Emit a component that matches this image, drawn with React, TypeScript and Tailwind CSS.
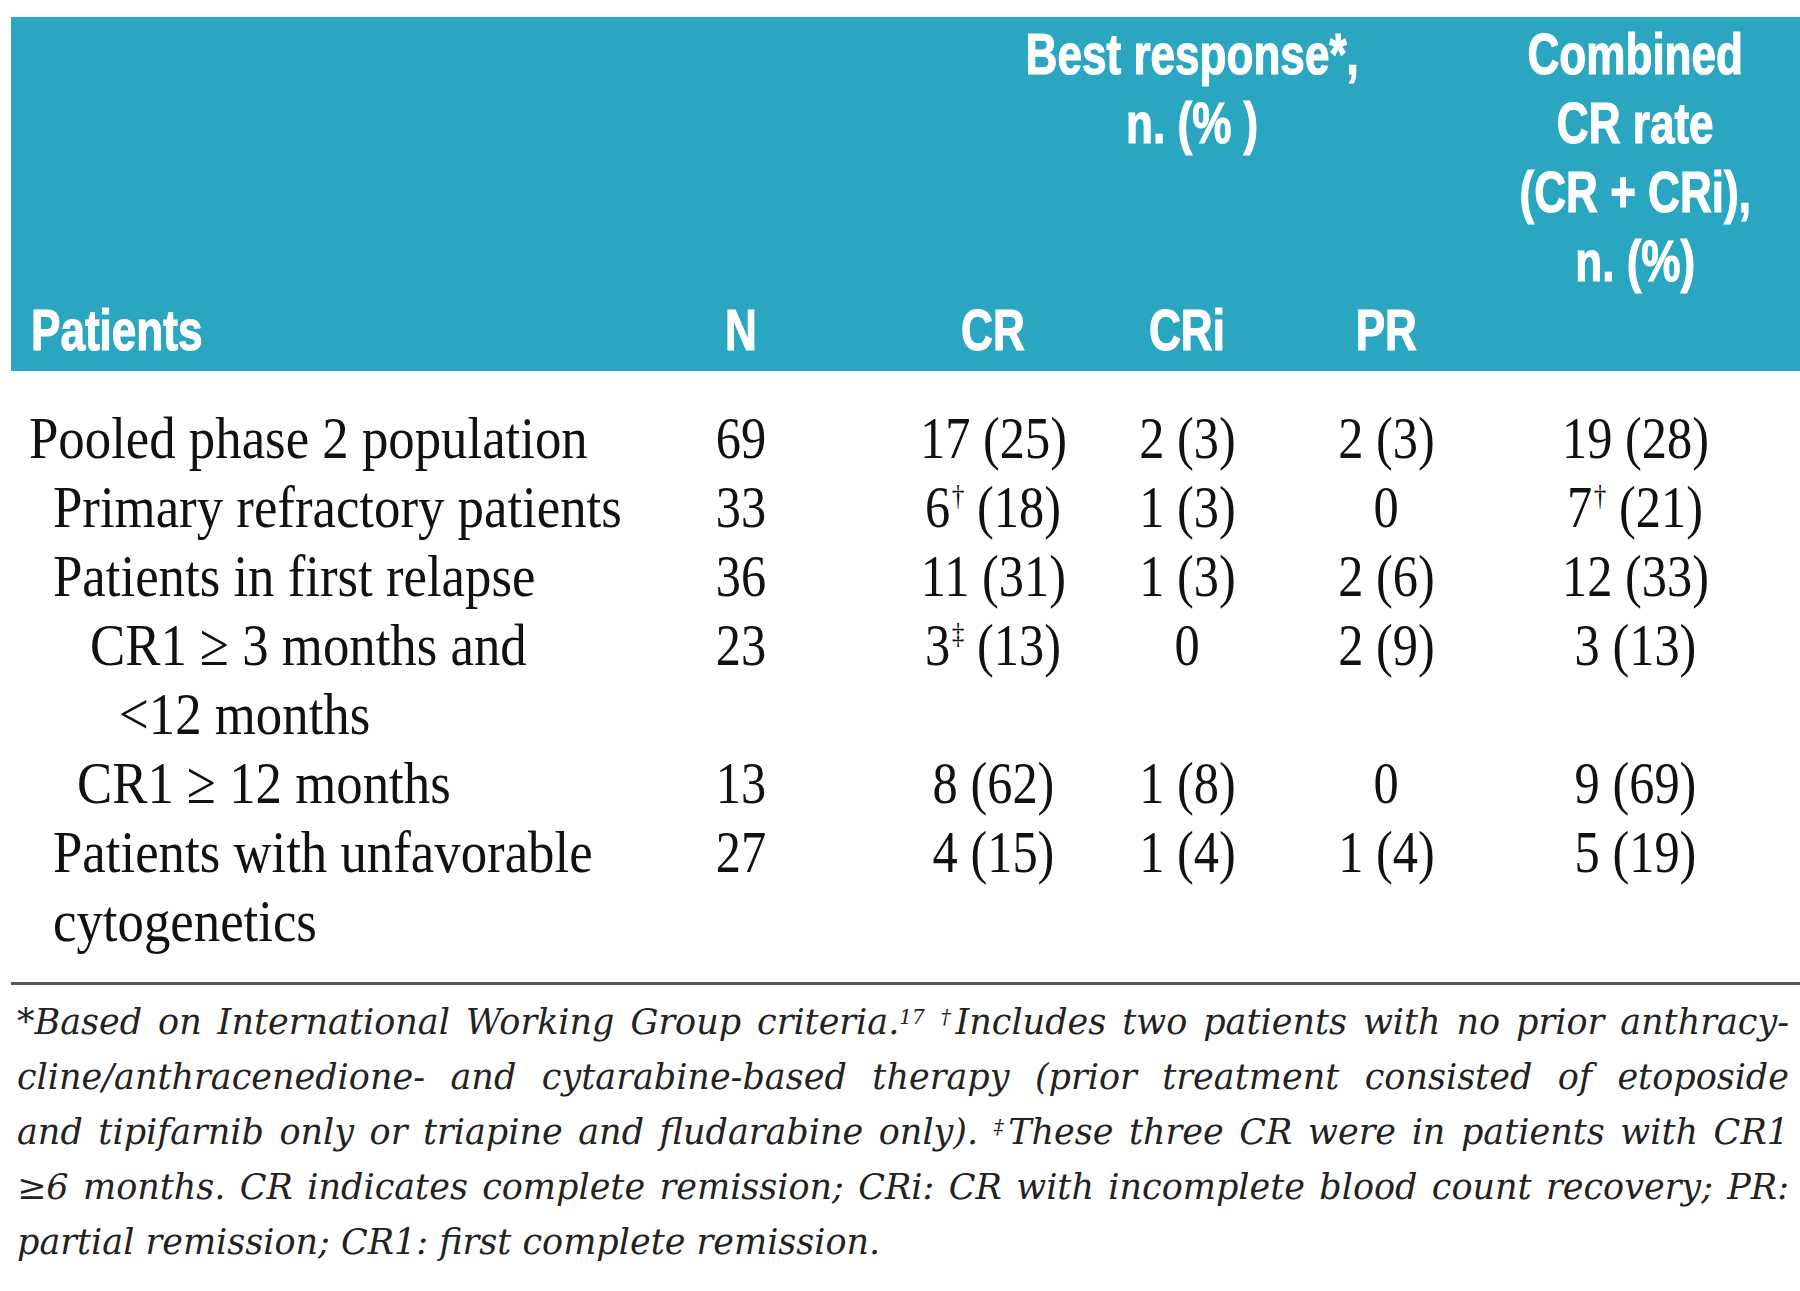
import React from "react";

const cols =
  "grid grid-cols-[604px_252px_252px_136px_262px_236px_47px]";

type Row = {
  label: { text: string; indent: number }[];
  n: string;
  cr: React.ReactNode;
  cri: React.ReactNode;
  pr: React.ReactNode;
  comb: React.ReactNode;
};

const Dag = ({ c }: { c: string }) => (
  <span className="text-[30px] leading-none relative -top-[22px] ml-[2px]">{c}</span>
);

const rows: Row[] = [
  {
    label: [{ text: "Pooled phase 2 population", indent: 18 }],
    n: "69",
    cr: "17 (25)",
    cri: "2 (3)",
    pr: "2 (3)",
    comb: "19 (28)",
  },
  {
    label: [{ text: "Primary refractory patients", indent: 42 }],
    n: "33",
    cr: (
      <>
        6<Dag c="†" /> (18)
      </>
    ),
    cri: "1 (3)",
    pr: "0",
    comb: (
      <>
        7<Dag c="†" /> (21)
      </>
    ),
  },
  {
    label: [{ text: "Patients in first relapse", indent: 42 }],
    n: "36",
    cr: "11 (31)",
    cri: "1 (3)",
    pr: "2 (6)",
    comb: "12 (33)",
  },
  {
    label: [
      { text: "CR1 ≥ 3 months and", indent: 79 },
      { text: "<12 months", indent: 108 },
    ],
    n: "23",
    cr: (
      <>
        3<Dag c="‡" /> (13)
      </>
    ),
    cri: "0",
    pr: "2 (9)",
    comb: "3 (13)",
  },
  {
    label: [{ text: "CR1 ≥ 12 months", indent: 66 }],
    n: "13",
    cr: "8 (62)",
    cri: "1 (8)",
    pr: "0",
    comb: "9 (69)",
  },
  {
    label: [
      { text: "Patients with unfavorable", indent: 42 },
      { text: "cytogenetics", indent: 42 },
    ],
    n: "27",
    cr: "4 (15)",
    cri: "1 (4)",
    pr: "1 (4)",
    comb: "5 (19)",
  },
];

const Num = ({ children }: { children: React.ReactNode }) => (
  <div className="flex justify-center whitespace-nowrap">
    <span className="inline-block scale-x-[0.84]">{children}</span>
  </div>
);

const H = ({ children, left }: { children: React.ReactNode; left?: boolean }) => (
  <span
    className={
      "inline-block scale-x-[0.76] whitespace-nowrap text-center [-webkit-text-stroke:1.2px_white] " +
      (left ? "origin-left" : "origin-center")
    }
  >
    {children}
  </span>
);

const footLines = [
  <>
    *Based on International Working Group criteria.<sup className="text-[20px]">17</sup>{" "}
    <sup className="text-[20px]">†</sup>Includes two patients with no prior anthracy-
  </>,
  <>cline/anthracenedione- and cytarabine-based therapy (prior treatment consisted of etoposide</>,
  <>
    and tipifarnib only or triapine and fludarabine only). <sup className="text-[20px]">‡</sup>These three CR were in patients with CR1
  </>,
  <>≥6 months. CR indicates complete remission; CRi: CR with incomplete blood count recovery; PR:</>,
];

export default function App() {
  return (
    <div className="w-[1800px] min-h-[1291px] bg-white pt-[17px]">
      {/* Header */}
      <div className="ml-[11px] bg-[#2aa6c1] text-white pt-[2px] h-[354px] font-['Liberation_Sans',Arial,sans-serif] font-bold text-[58px] leading-[69px]">
        <div className={cols}>
          <div className="col-start-3 col-span-3 row-start-1 flex justify-center">
            <H>
              Best response*,
              <br />
              n. (% )
            </H>
          </div>
          <div className="col-start-6 row-start-1 flex justify-center">
            <H>
              Combined
              <br />
              CR rate
              <br />
              (CR + CRi),
              <br />
              n. (%)
            </H>
          </div>
          <div className="col-start-1 row-start-2 pl-[20px]">
            <H left>Patients</H>
          </div>
          <div className="col-start-2 row-start-2 flex justify-center">
            <H>N</H>
          </div>
          <div className="col-start-3 row-start-2 flex justify-center">
            <H>CR</H>
          </div>
          <div className="col-start-4 row-start-2 flex justify-center">
            <H>CRi</H>
          </div>
          <div className="col-start-5 row-start-2 flex justify-center">
            <H>PR</H>
          </div>
        </div>
      </div>

      {/* Body */}
      <div className="ml-[11px] pt-[33px] pb-[26px] font-['Liberation_Serif','Times_New_Roman',serif] text-[60px] leading-[69px] text-[#111]">
        {rows.map((r, i) => (
          <div key={i} className={cols}>
            <div>
              {r.label.map((l, j) => (
                <div key={j} className="whitespace-nowrap" style={{ paddingLeft: l.indent }}>
                  <span className="inline-block origin-left scale-x-[0.88]">{l.text}</span>
                </div>
              ))}
            </div>
            <Num>{r.n}</Num>
            <Num>{r.cr}</Num>
            <Num>{r.cri}</Num>
            <Num>{r.pr}</Num>
            <Num>{r.comb}</Num>
          </div>
        ))}
      </div>

      {/* Rule */}
      <div className="ml-[11px] h-[3px] bg-[#555]" />

      {/* Footnote */}
      <div className="ml-[17px] mr-[11px] pt-[10px] italic font-['DejaVu_Serif',serif] text-[35px] leading-[55px] text-[#222]">
        {footLines.map((l, i) => (
          <div key={i} className="whitespace-nowrap text-justify [text-align-last:justify]">
            {l}
          </div>
        ))}
        <div className="whitespace-nowrap">partial remission; CR1: first complete remission.</div>
      </div>
    </div>
  );
}
